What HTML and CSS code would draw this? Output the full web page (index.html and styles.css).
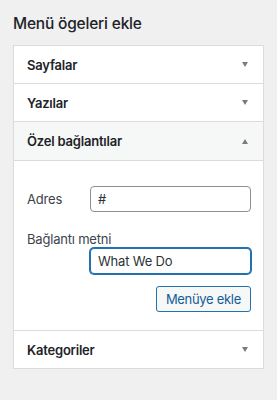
FILE: index.html
```html
<!DOCTYPE html>
<html lang="tr">
<head>
    <meta charset="UTF-8">
    <title>Menü ögeleri ekle</title>
    <link rel="stylesheet" href="styles.css">
</head>
<body>
    <h2 class="title">Menü ögeleri ekle</h2>

    <div class="accordion">
        <div class="section">
            <div class="section-head">Sayfalar <span class="arrow"></span></div>
        </div>
        <div class="section">
            <div class="section-head">Yazılar <span class="arrow"></span></div>
        </div>
        <div class="section open">
            <div class="section-head">Özel bağlantılar <span class="arrow up"></span></div>
            <div class="section-body">
                <div class="field-row">
                    <label for="url">Adres</label>
                    <input type="text" id="url" value="#">
                </div>
                <label class="block-label" for="linktext">Bağlantı metni</label>
                <div class="field-row">
                    <input type="text" id="linktext" class="focused" value="What We Do">
                </div>
                <div class="actions">
                    <button>Menüye ekle</button>
                </div>
            </div>
        </div>
        <div class="section">
            <div class="section-head">Kategoriler <span class="arrow"></span></div>
        </div>
    </div>
</body>
</html>
```

FILE: styles.css
```css
body {
    font-family: Inter, "Noto Sans", sans-serif;
    background-color: #f0f0f1;
    color: #1d2327;
    margin: 0;
    padding: 0 13px;
    letter-spacing: -0.2px;
}

.title {
    font-size: 15.5px;
    font-weight: 500;
    margin: 0;
    padding-top: 15px;
    height: 30px;
    line-height: 18px;
}

.accordion {
    background: white;
    border: 1px solid #dcdcde;
    box-shadow: 0 1px 1px rgba(0, 0, 0, 0.04);
}

.section {
    border-top: 1px solid #dcdcde;
}

.section:first-child {
    border-top: none;
}

.section-head {
    display: flex;
    justify-content: space-between;
    align-items: center;
    height: 37px;
    padding: 0 15px 0 13px;
    font-size: 13px;
    font-weight: 600;
}

.open .section-head {
    background: #f6f7f7;
    height: 38px;
    border-bottom: 1px solid #dcdcde;
}

.arrow {
    width: 0;
    height: 0;
    border-left: 3.5px solid transparent;
    border-right: 3.5px solid transparent;
    border-top: 5px solid #787c82;
}

.arrow.up {
    border-top: none;
    border-bottom: 5px solid #787c82;
}

.section-body {
    padding: 25px 12px 18px 13px;
}

.field-row {
    display: flex;
    align-items: center;
    justify-content: space-between;
}

label {
    font-size: 13px;
    color: #3c434a;
}

.block-label {
    display: block;
    margin-top: 19px;
    margin-bottom: 1px;
}

input {
    width: 161px;
    height: 26px;
    box-sizing: border-box;
    margin-left: auto;
    padding: 0 7px;
    border: 1px solid #8c8f94;
    border-radius: 4px;
    font-family: inherit;
    font-size: 13px;
    letter-spacing: -0.2px;
    color: #2c3338;
    background: white;
}

input.focused {
    border-color: #2271b1;
    box-shadow: 0 0 0 1px #2271b1;
}

.actions {
    display: flex;
    justify-content: flex-end;
    margin-top: 12px;
}

button {
    height: 26px;
    padding: 0 9px;
    background: #f6f7f7;
    border: 1px solid #2271b1;
    border-radius: 3px;
    color: #135e96;
    font-family: inherit;
    font-size: 13px;
    letter-spacing: -0.3px;
}
```
